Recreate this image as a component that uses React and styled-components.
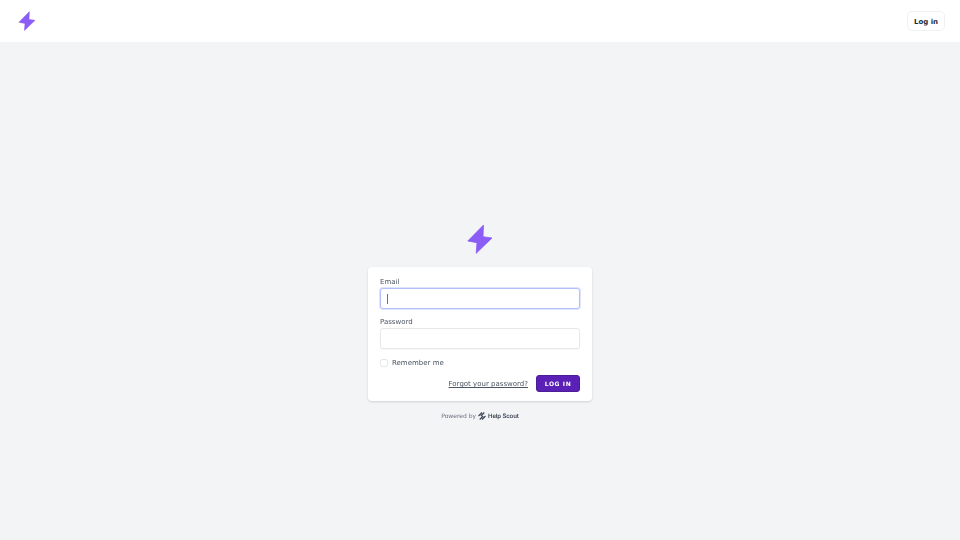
import React from 'react';
import styled, { createGlobalStyle } from 'styled-components';

const GlobalStyle = createGlobalStyle`
  html, body {
    margin: 0;
    padding: 0;
    background: #f3f4f6;
    font-family: "DejaVu Sans", sans-serif;
  }
  * { box-sizing: border-box; }
`;

// the reference is a soft, downscaled capture
const Page = styled.div`
  width: 960px;
  height: 540px;
  display: flex;
  flex-direction: column;
  overflow: hidden;
  filter: blur(0.35px);
  text-rendering: geometricPrecision;
`;

const Header = styled.header`
  height: 42px;
  flex: none;
  background: #fff;
  display: flex;
  align-items: center;
  justify-content: space-between;
  padding: 0 15px 0 18px;
`;

const HeaderButton = styled.button`
  width: 38px;
  height: 20px;
  padding: 1px 0 0;
  border: 1px solid #f0f1f3;
  border-radius: 5px;
  background: #fff;
  color: #1f2937;
  font: 700 7px "DejaVu Sans", sans-serif;
`;

const Main = styled.main`
  flex: 1;
  display: flex;
  flex-direction: column;
  align-items: center;
  padding-top: 182px;
`;

const Card = styled.form`
  width: 224px;
  height: 134px;
  margin-top: 13px;
  padding: 9px 12px 0;
  background: #fff;
  border-radius: 4px;
  box-shadow: 0 1px 3px rgba(0, 0, 0, 0.1), 0 1px 2px rgba(0, 0, 0, 0.06);
`;

const Label = styled.label`
  display: block;
  height: 11px;
  margin-top: ${(p) => p.$top || 0}px;
  color: #4b5563;
  font-size: 7px;
  line-height: 12px;
`;

const Field = styled.div`
  width: 200px;
  height: 21px;
  margin-top: 1px;
  display: flex;
  align-items: center;
  padding-left: 6px;
  background: #fff;
  border: 1px solid ${(p) => (p.$focused ? '#b4bffc' : '#e5e7eb')};
  border-radius: 3px;
  box-shadow: ${(p) => (p.$focused ? '0 0 0 1px #dfe4ff' : '0 1px 1px rgba(0, 0, 0, 0.03)')};
`;

const Caret = styled.span`
  width: 1px;
  height: 10px;
  background: #6b7280;
`;

const RememberRow = styled.div`
  display: flex;
  align-items: center;
  gap: 4px;
  height: 12px;
  margin-top: 8px;
`;

const Checkbox = styled.span`
  width: 8px;
  height: 8px;
  background: #fff;
  border: 1px solid #e5e7eb;
  border-radius: 2px;
`;

const RememberText = styled.span`
  color: #4b5563;
  font-size: 7px;
`;

const Actions = styled.div`
  display: flex;
  align-items: center;
  justify-content: flex-end;
  gap: 8px;
  margin-top: 6px;
`;

const Forgot = styled.a`
  padding-top: 1px;
  color: #4b5563;
  font-size: 7px;
  text-decoration: underline;
`;

const Submit = styled.button`
  width: 44px;
  height: 17px;
  padding: 0;
  border: 1px solid #4c1d95;
  border-radius: 3px;
  background: #5b21b6;
  color: #fff;
  font: 700 6px "DejaVu Sans", sans-serif;
  letter-spacing: 0.6px;
`;

const Powered = styled.div`
  display: flex;
  align-items: center;
  gap: 2px;
  margin-top: 9px;
  height: 12px;
  color: #6b7280;
  font-size: 6px;
`;

const BrandName = styled.span`
  color: #374151;
  font-family: Inter, sans-serif;
  font-weight: 600;
  font-size: 6px;
  letter-spacing: -0.1px;
`;

const Bolt = ({ width, height }) => (
  <svg width={width} height={height} viewBox="0 0 26 30" fill="#8b5cf6">
    <path d="M16.5 1 L16 12.7 L25 14 L9.2 29.3 L10 18.7 L0.8 17 Z" stroke="#8b5cf6" strokeWidth="0.8" strokeLinejoin="round" />
  </svg>
);

const ScoutMark = () => (
  <svg width="8" height="8" viewBox="0 0 8 8" fill="none" stroke="#374151" strokeWidth="1.1">
    <path d="M0.5 4 L4 0.5 M2.8 4 L6.3 0.5 M1.7 7.5 L5.2 4 M4 7.5 L7.5 4" />
  </svg>
);

export default function App() {
  return (
    <Page>
      <GlobalStyle />
      <Header>
        <Bolt width={18} height={20} />
        <HeaderButton type="button">Log in</HeaderButton>
      </Header>
      <Main>
        <Bolt width={26} height={30} />
        <Card>
          <Label>Email</Label>
          <Field $focused><Caret /></Field>
          <Label $top={7}>Password</Label>
          <Field />
          <RememberRow>
            <Checkbox />
            <RememberText>Remember me</RememberText>
          </RememberRow>
          <Actions>
            <Forgot href="#">Forgot your password?</Forgot>
            <Submit type="button">LOG IN</Submit>
          </Actions>
        </Card>
        <Powered>
          <span>Powered by</span>
          <ScoutMark />
          <BrandName>Help Scout</BrandName>
        </Powered>
      </Main>
    </Page>
  );
}
